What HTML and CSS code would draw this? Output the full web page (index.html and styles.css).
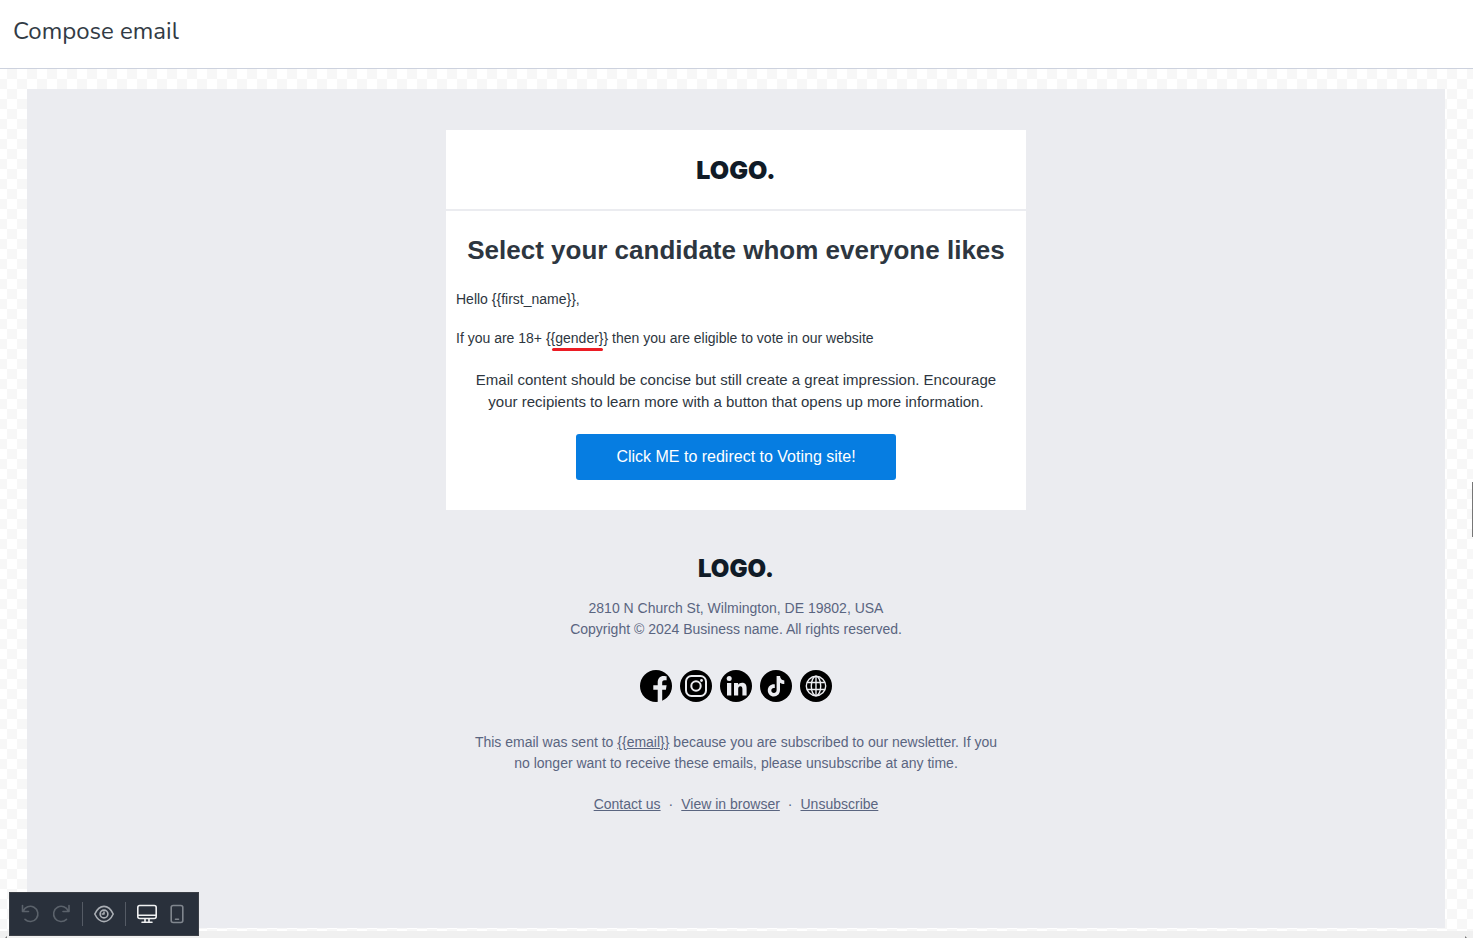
FILE: index.html
```html
<!DOCTYPE html>
<html lang="en">
<head>
<meta charset="utf-8">
<title>Compose email</title>
<link rel="stylesheet" href="styles.css">
</head>
<body>
<header class="topbar"><h1 class="title">Compose email</h1></header>
<main class="stage">
  <div class="canvas">
    <article class="email">
      <section class="card">
        <div class="brand"><span class="logo">LOGO.</span></div>
        <div class="body">
          <h2 class="headline">Select your candidate whom everyone likes</h2>
          <p class="line">Hello {{first_name}},</p>
          <p class="line">If you are 18+ {<span class="marked">{gender}</span>} then you are eligible to vote in our website</p>
          <p class="lead">Email content should be concise but still create a great impression. Encourage<br>your recipients to learn more with a button that opens up more information.</p>
          <button class="cta" type="button">Click ME to redirect to Voting site!</button>
        </div>
      </section>
      <footer class="footer">
        <span class="logo logo-small">LOGO.</span>
        <p class="address">2810 N Church St, Wilmington, DE 19802, USA<br>Copyright © 2024 Business name. All rights reserved.</p>
        <nav class="social">
          <a href="#" aria-label="Facebook"><svg viewBox="0 0 32 32"><circle cx="16" cy="16" r="16"/><path fill="#ebecf0" d="M17.700 32V19.800H13.300V15.300H17.700V12.500C17.700 8.300 19.900 5.900 23.600 5.900C25 5.900 26.600 6.200 26.600 6.200V10.200H24.500C22.700 10.200 22.200 11.200 22.200 12.700V15.300H26.600L25.900 19.800H22.200V32Z"/></svg></a>
          <a href="#" aria-label="Instagram"><svg viewBox="0 0 32 32"><circle cx="16" cy="16" r="16"/><g fill="none" stroke="#ebecf0" stroke-width="2"><rect x="6" y="6" width="20" height="20" rx="5.500"/><circle cx="16" cy="16" r="4.700"/></g><circle cx="21.500" cy="10.500" r="1.400" fill="#ebecf0"/></svg></a>
          <a href="#" aria-label="LinkedIn"><svg viewBox="0 0 32 32"><circle cx="16" cy="16" r="16"/><g fill="#ebecf0"><circle cx="9.200" cy="8.600" r="2.500"/><path d="M7 13h4.300v12.500H7zM14 13h4.100v1.800c.8-1.300 2.200-2.100 4-2.100 3.300 0 4.500 2.200 4.500 5.500v7.300h-4.200V19c0-1.700-.5-2.800-2-2.800-1.600 0-2.200 1.200-2.200 2.800v6.500H14z"/></g></svg></a>
          <a href="#" aria-label="TikTok"><svg viewBox="0 0 32 32"><circle cx="16" cy="16" r="16"/><path fill="#ebecf0" d="M16.600 6H20c.3 2.700 1.800 4.200 4.300 4.500v3.600c-1.700 0-3.100-.5-4.300-1.400v7.100c0 4.200-2.700 6.600-6.100 6.600-3.600 0-6.100-2.700-6.100-6 0-3.700 3-6.400 7-6v3.700c-2-.5-3.500.6-3.500 2.300 0 1.500 1.100 2.500 2.600 2.500 1.700 0 2.700-1.100 2.700-2.900z"/></svg></a>
          <a href="#" aria-label="Website"><svg viewBox="0 0 32 32"><circle cx="16" cy="16" r="16"/><g fill="none" stroke="#ebecf0" stroke-width="1.400"><circle cx="16" cy="16" r="9.700"/><ellipse cx="16" cy="16" rx="4.700" ry="9.700"/><path d="M16 6.300v19.400M7 12.500h18M7 19.500h18"/></g></svg></a>
        </nav>
        <p class="notice">This email was sent to <a href="#">{{email}}</a> because you are subscribed to our newsletter. If you<br>no longer want to receive these emails, please unsubscribe at any time.</p>
        <p class="links"><a href="#">Contact us</a><span>·</span><a href="#">View in browser</a><span>·</span><a href="#">Unsubscribe</a></p>
      </footer>
    </article>
  </div>
  <i class="side-handle"></i>
</main>
<div class="bottom-edge">
  <svg class="corner" viewBox="0 0 2 2"><path d="M2 0v2H0z"/></svg>
  <svg class="corner" viewBox="0 0 2 2"><path d="M0 0v2h2z"/></svg>
</div>
<div class="toolbar" role="toolbar" aria-label="Editor tools">
  <button class="tool dim" type="button" aria-label="Undo"><svg viewBox="0 0 20 20"><path d="M1.500 1.500v6h6M2.200 7.200A7.600 7.600 0 1 1 4 15.400"/></svg></button>
  <button class="tool dim" type="button" aria-label="Redo"><svg viewBox="0 0 20 20"><path d="M18 1.500v6h-6M17.300 7.200A7.600 7.600 0 1 0 15.500 15.400"/></svg></button>
  <span class="divider"></span>
  <button class="tool" type="button" aria-label="Preview"><svg viewBox="0 0 20 20"><path d="M.8 10C5.500-.2 14.500-.2 19.200 10 14.500 20.200 5.500 20.200.8 10z"/><circle cx="10" cy="10" r="3.900"/><path d="M10 8v2H8.200"/></svg></button>
  <span class="divider"></span>
  <button class="tool bright" type="button" aria-label="Desktop"><svg viewBox="0 0 20 20"><rect x=".8" y="1.500" width="18.400" height="13" rx="2"/><path d="M1 11.300h18M8 15v3M12 15v3M5 18.200h10"/></svg></button>
  <button class="tool mid" type="button" aria-label="Mobile"><svg viewBox="0 0 20 20"><rect x="4.200" y="1.500" width="11.600" height="17" rx="2"/><path d="M8.500 15.300h3"/></svg></button>
</div>
</body>
</html>
```
FILE: styles.css
```css
* { box-sizing: border-box; }
html, body { height: 100%; }
body { margin: 0; display: flex; flex-direction: column; background: #fff; font-family: "Liberation Sans", Arial, sans-serif; color: #2d3640; }
h1, h2, p { margin: 0; }
a { color: inherit; }
.topbar { padding: 14px 13px 20px; border-bottom: 1px solid #cdd2de; }
.title { font: 400 24px/34px Nunito, "Open Sans", sans-serif; color: #323b45; }
.stage { flex: 1; display: flex; position: relative; padding: 20px 28px 3px 27px; background: repeating-conic-gradient(#f7f7f7 0 25%, #fff 0 50%) 7px 10px / 20px 20px; }
.canvas { flex: 1; background: #ebecf0; padding: 41px 20px 0; }
.email { max-width: 580px; margin: 0 auto; }
.card { background: #fff; }
.brand { height: 81px; display: flex; align-items: center; justify-content: center; border-bottom: 2px solid #ebecf0; }
.logo { font: 900 25px/30px Inter, sans-serif; color: #101b27; }
.logo-small { font-size: 24px; line-height: 28px; }
.body { display: flex; flex-direction: column; padding: 20px 10px 30px; }
.headline { font-size: 26px; line-height: 38px; text-align: center; color: #2d3640; }
.line { font-size: 14px; line-height: 21px; margin-top: 18px; }
.headline + .line { margin-top: 20px; }
.marked { position: relative; }
.marked::after { content: ""; position: absolute; left: 1px; right: 1px; bottom: -5px; height: 3px; border-radius: 2px; background: #ec1c24; }
.lead { font-size: 15px; line-height: 22px; margin-top: 20px; text-align: center; }
.cta { align-self: center; width: 320px; height: 46px; margin-top: 21px; border: 0; border-radius: 3px; background: #067de1; color: #fff; font: 16px "Liberation Sans", Arial, sans-serif; }
.footer { padding: 45px 10px 20px; display: flex; flex-direction: column; align-items: center; text-align: center; font-size: 14px; line-height: 21px; color: #5a6580; }
.address { margin-top: 15px; }
.social { display: flex; gap: 8px; margin: 30px 0; }
.social a, .social svg { display: block; width: 32px; height: 32px; }
.links { display: flex; gap: 8px; margin-top: 20px; }
.side-handle { position: absolute; right: 0; top: 413px; width: 1px; height: 55px; background: #777; }
.bottom-edge { height: 7px; padding: 0 6px 0 5px; display: flex; justify-content: space-between; align-items: flex-end; background: #f0f0f0; }
.corner { width: 2px; height: 2px; fill: #777; }
.toolbar { position: fixed; left: 9px; bottom: 2px; height: 44px; padding: 0 11px; display: flex; align-items: center; gap: 10px; background: #29303b; border: 1px solid #3b3f46; }
.tool { width: 20px; height: 20px; padding: 0; border: 0; background: none; color: #abafb5; }
.tool svg { display: block; width: 20px; height: 20px; fill: none; stroke: currentColor; stroke-width: 1.600; stroke-linecap: round; stroke-linejoin: round; }
.dim { color: #5b626b; }
.bright { color: #f0f1f2; }
.mid { color: #80868e; }
.divider { width: 1px; height: 24px; margin: 0 1px; background: #555b65; }
```
